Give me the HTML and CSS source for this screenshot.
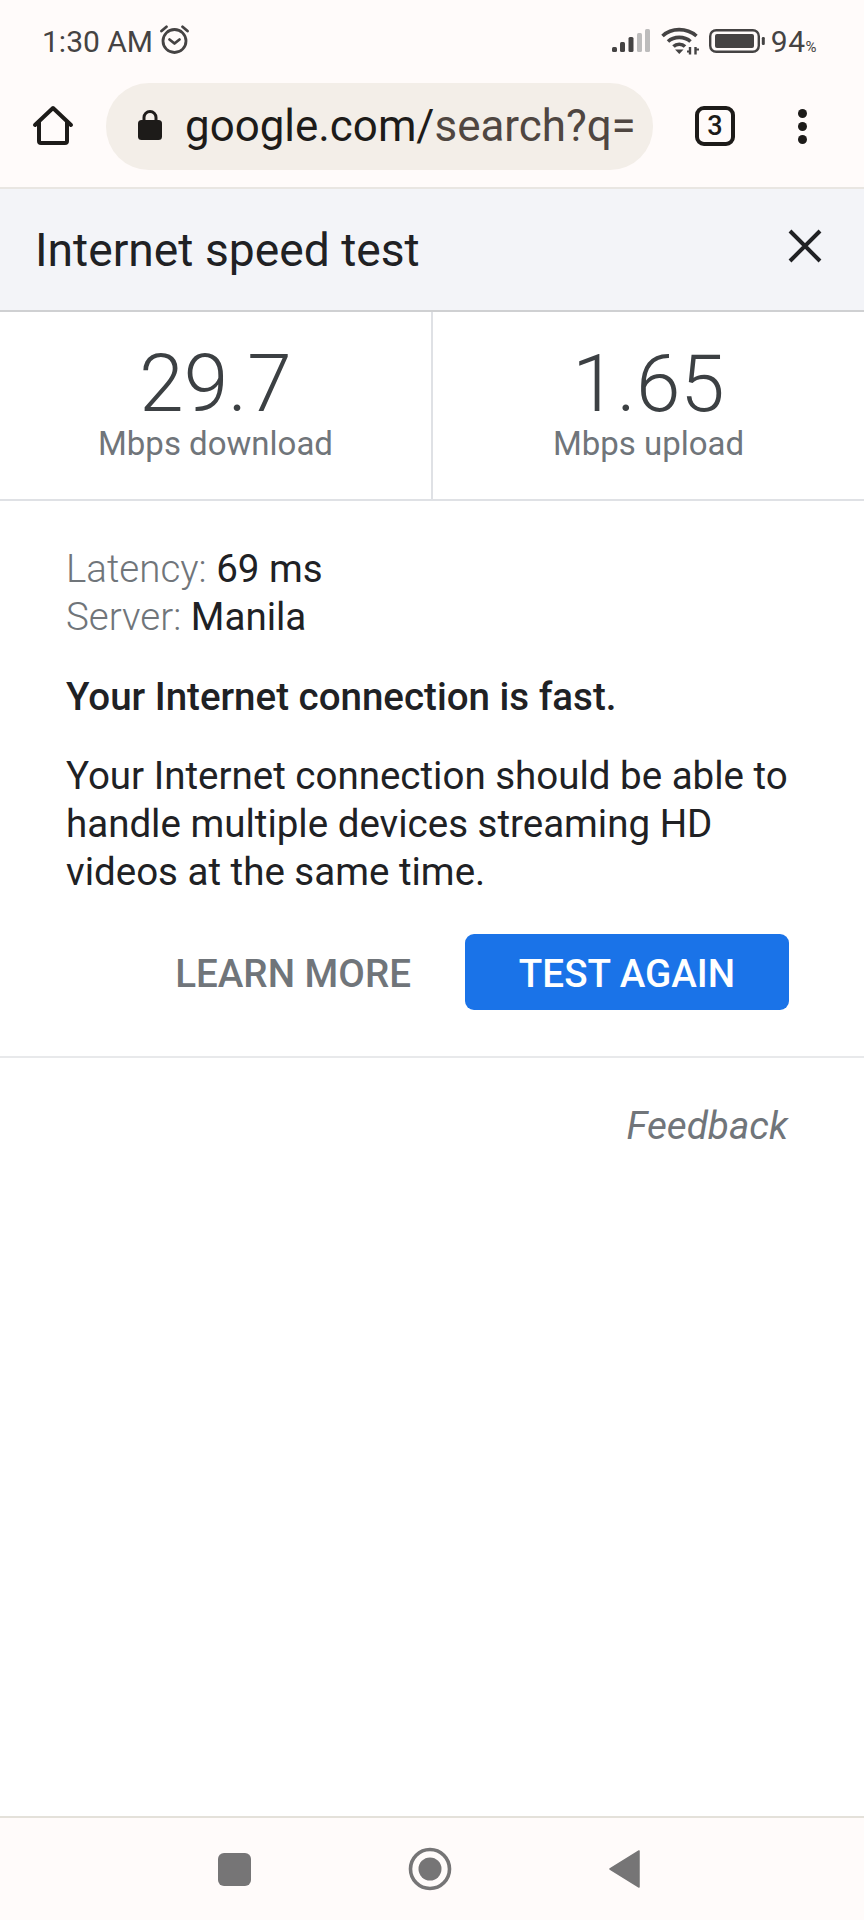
FILE: index.html
```html
<!DOCTYPE html>
<html lang="en">
<head>
<meta charset="utf-8">
<title>Internet speed test</title>
<link rel="stylesheet" href="styles.css">
</head>
<body>
<div class="page">
  <header class="chrome">
    <div class="status">
      <div class="status-left">
        <span class="time">1:30 AM</span>
        <svg class="alarm" width="31" height="29" viewBox="0 0 31 29" fill="none" stroke="#454343" stroke-width="2.800" stroke-linecap="round" stroke-linejoin="round"><circle cx="15.500" cy="16" r="11.500"/><path d="M10.500 14.500l5 4 5-4"/><path d="M2.500 6 7.500 1.800M28.500 6 23.500 1.800"/></svg>
      </div>
      <div class="status-right">
        <svg class="signal" width="40" height="26" viewBox="0 0 40 26"><rect x="1" y="19" width="5" height="5" rx="1.500" fill="#454343"/><rect x="9" y="14" width="5" height="10" rx="1.500" fill="#454343"/><rect x="17.500" y="9" width="5" height="15" rx="1.500" fill="#454343"/><rect x="26" y="5" width="5" height="19" rx="1.500" fill="#bdbcbc"/><rect x="34" y="1" width="5" height="23" rx="1.500" fill="#bdbcbc"/></svg>
        <svg class="wifi" width="38" height="28" viewBox="0 0 38 28" fill="none" stroke="#454343" stroke-width="3.600"><path d="M1.500 9C10.500 .5 25.500 .5 35.500 9"/><path d="M7 14.500C13 9 23.500 9 29.500 14.500"/><path d="M12.500 19.500C15.500 16.500 21 16.500 24 19.500"/><path d="M18.300 27 14 22.500h8.500z" fill="#454343" stroke="none"/><path d="M29 20v7.500M34.500 20v7.500" stroke-width="2.400"/><path d="M26 24.500h3M34.500 22.500h3.500" stroke-width="2"/></svg>
        <svg class="battery" width="56" height="26" viewBox="0 0 56 26"><rect x="1.200" y="2.200" width="48.600" height="21.600" rx="6" fill="none" stroke="#454343" stroke-width="2.400"/><rect x="6" y="6" width="39" height="14" rx="2" fill="#454343"/><rect x="52.800" y="9" width="3" height="8" rx="1.200" fill="#454343"/></svg>
        <span class="pct">94<small>%</small></span>
      </div>
    </div>
    <div class="toolbar">
      <svg class="home" width="42" height="42" viewBox="0 0 42 42" fill="none" stroke="#1d1b19" stroke-width="4" stroke-linejoin="round" stroke-linecap="round"><path d="M3 20 21 3l18 17"/><path d="M7 17v19a2 2 0 0 0 2 2h24a2 2 0 0 0 2-2V17"/></svg>
      <div class="omnibox">
        <svg class="lock" width="26" height="36" viewBox="0 0 26 36"><path d="M7 14V9.500a6 6 0 0 1 12 0V14" fill="none" stroke="#1d1b19" stroke-width="3"/><rect x="1" y="12" width="24" height="20" rx="3.500" fill="#1d1b19"/></svg>
        <span class="url"><span class="host">google.com/</span>search?q=</span>
      </div>
      <div class="tabs">3</div>
      <div class="menu"><i></i><i></i><i></i></div>
    </div>
  </header>
  <main class="content">
    <div class="title-bar">
      <h1 class="title">Internet speed test</h1>
      <svg class="close" width="34" height="34" viewBox="0 0 34 34" fill="none" stroke="#202124" stroke-width="4"><path d="M2 2l30 30M32 2 2 32"/></svg>
    </div>
    <div class="stats">
      <div class="stat"><div class="num">29.7</div><div class="unit">Mbps download</div></div>
      <div class="stat"><div class="num">1.65</div><div class="unit">Mbps upload</div></div>
    </div>
    <section class="details">
      <div class="meta">
        <div><span class="label">Latency:</span> 69 ms</div>
        <div><span class="label">Server:</span> Manila</div>
      </div>
      <p class="verdict">Your Internet connection is fast.</p>
      <p class="desc">Your Internet connection should be able to handle multiple devices streaming HD videos at the same time.</p>
      <div class="actions">
        <span class="learn">LEARN MORE</span>
        <span class="again">TEST AGAIN</span>
      </div>
    </section>
    <div class="feedback">Feedback</div>
  </main>
  <footer class="nav">
    <span class="nav-square"></span>
    <svg class="nav-home" width="44" height="44" viewBox="0 0 44 44"><circle cx="22" cy="22" r="19.500" fill="none" stroke="#767576" stroke-width="3.600"/><circle cx="22" cy="22" r="11.500" fill="#767576"/></svg>
    <svg class="nav-back" width="32" height="38" viewBox="0 0 32 38"><path d="M30 1v36L1 19z" fill="#767576" stroke="#767576" stroke-width="1.500" stroke-linejoin="round"/></svg>
  </footer>
</div>
</body>
</html>
```

FILE: styles.css
```css
* { box-sizing: border-box; }
html, body { margin: 0; padding: 0; }
body { background: #fff; font-family: Roboto, "Liberation Sans", sans-serif; }
.page { width: 864px; height: 1920px; display: flex; flex-direction: column; overflow: hidden; }
.chrome { height: 189px; background: #fffbfa; border-bottom: 2px solid #e9e6e2; flex: none; }
.status { height: 82px; display: flex; justify-content: space-between; align-items: center; padding: 2px 47px 2px 42px; }
.status-left, .status-right { display: flex; align-items: center; }
.time { font-size: 30px; color: #454343; }
.alarm { margin-left: 6px; margin-top: -4px; }
.signal { margin-right: 10px; }
.wifi { margin-right: 10px; }
.battery { margin-right: 6px; }
.pct { font-size: 30px; color: #454343; letter-spacing: .5px; }
.pct small { font-size: 15px; }
.toolbar { height: 88px; display: flex; align-items: center; }
.home { margin-left: 32px; flex: none; }
.omnibox { width: 547px; height: 87px; margin-left: 32px; border-radius: 43px; background: #f3eee8; display: flex; align-items: center; padding-left: 31px; flex: none; }
.lock { flex: none; }
.url { margin-left: 22px; font-size: 43.900px; line-height: 60px; color: #4f4641; white-space: nowrap; }
.host { color: #1d1b19; }
.tabs { width: 40px; height: 40px; margin-left: 42px; border: 4px solid #1d1b19; border-radius: 9px; font-size: 27px; font-weight: 500; color: #1d1b19; display: flex; align-items: center; justify-content: center; flex: none; }
.menu { margin-left: 63px; display: flex; flex-direction: column; gap: 4px; }
.menu i { width: 9px; height: 9px; border-radius: 50%; background: #1d1b19; display: block; }
.content { flex: 1; display: flex; flex-direction: column; }
.title-bar { height: 123px; background: #f3f4f8; border-bottom: 2px solid #cfd0d2; display: flex; align-items: center; justify-content: space-between; padding: 0 42px 0 35px; }
.title { margin: 0; font-size: 46.200px; font-weight: 400; color: #202124; }
.close { margin-top: -8px; }
.stats { height: 189px; display: flex; border-bottom: 2px solid #dfe1e5; }
.stat { flex: 1; text-align: center; padding-top: 32px; }
.stat + .stat { border-left: 2px solid #dfe1e5; }
.num { font-size: 80px; line-height: 80px; font-weight: 300; color: #3c4043; }
.unit { font-size: 33px; line-height: 40px; color: #70757a; }
.details { padding: 44px 75px 46px 66px; border-bottom: 2px solid #e8e9eb; }
.meta { font-size: 38.500px; line-height: 48px; color: #202124; }
.label { color: #70757a; font-weight: 300; }
.verdict { margin: 32px 0 0; font-size: 38.500px; line-height: 48px; font-weight: 500; color: #202124; }
.desc { margin: 31px 0 0; font-size: 38.500px; line-height: 48px; color: #202124; }
.actions { margin-top: 38px; display: flex; justify-content: flex-end; align-items: center; gap: 54px; }
.learn { font-size: 38.600px; font-weight: 500; color: #70757a; padding-top: 2px; }
.again { width: 324px; height: 76px; padding-top: 2px; border-radius: 9px; background: #1a73e8; color: #fff; font-size: 38.600px; font-weight: 500; display: flex; align-items: center; justify-content: center; }
.feedback { padding: 45px 76px 0 0; text-align: right; font-size: 38.700px; font-style: italic; color: #70757a; }
.nav { height: 104px; flex: none; background: #fffbfa; border-top: 2px solid #e4e1da; display: flex; align-items: center; padding: 0 0 0 218px; }
.nav-square { width: 33px; height: 33px; border-radius: 6px; background: #767576; }
.nav-home { margin-left: 157px; }
.nav-back { margin-left: 157px; }
```
